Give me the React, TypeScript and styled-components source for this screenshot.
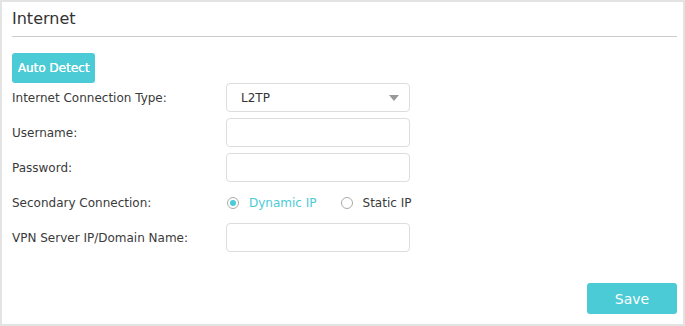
import styled, { createGlobalStyle } from "styled-components"

const Global = createGlobalStyle`
  html, body {
    margin: 0;
    padding: 0;
    background: #ffffff;
  }
  body {
    font-family: "DejaVu Sans", Verdana, sans-serif;
    color: #333333;
  }
`

const teal = "#4acbd6"

const fields = [
  { label: "Internet Connection Type:", kind: "select", value: "L2TP" },
  { label: "Username:", kind: "input" },
  { label: "Password:", kind: "input" },
  { label: "Secondary Connection:", kind: "radio" },
  { label: "VPN Server IP/Domain Name:", kind: "input" },
]

export default function App() {
  return (
    <>
      <Global />
      <Panel>
        <Title>Internet</Title>
        <Content>
          <Button>Auto Detect</Button>
          <Form>
            {fields.map((f) => (
              <Row key={f.label}>
                <Label>{f.label}</Label>
                {f.kind === "select" && (
                  <Field>
                    <span>{f.value}</span>
                    <Caret />
                  </Field>
                )}
                {f.kind === "input" && <Field />}
                {f.kind === "radio" && (
                  <Radios>
                    <RadioItem $active>
                      <RadioDot $active />
                      Dynamic IP
                    </RadioItem>
                    <RadioItem>
                      <RadioDot />
                      Static IP
                    </RadioItem>
                  </Radios>
                )}
              </Row>
            ))}
          </Form>
        </Content>
        <Footer>
          <SaveButton>Save</SaveButton>
        </Footer>
      </Panel>
    </>
  )
}

const Panel = styled.div`
  box-sizing: border-box;
  width: 685px;
  height: 326px;
  border: 2px solid #e3e3e3;
  padding: 0 6px 0 10px;
  display: flex;
  flex-direction: column;
`

const Title = styled.div`
  font-size: 16px;
  line-height: 20px;
  padding: 7px 0 7px;
  border-bottom: 1px solid #cccccc;
  color: #333333;
`

const Content = styled.div`
  padding-top: 16px;
  flex-grow: 1;
`

const Button = styled.button`
  font-family: inherit;
  background: ${teal};
  color: #ffffff;
  border: none;
  border-radius: 3px;
  height: 30px;
  width: 83px;
  padding: 0;
  font-size: 12px;
  font-weight: normal;
  text-shadow: 0.3px 0 0 #ffffff;
`

const Form = styled.div`
  display: flex;
  flex-direction: column;
  gap: 6px;
`

const Row = styled.div`
  display: grid;
  grid-template-columns: 214px 184px;
  align-items: center;
  height: 29px;
`

const Label = styled.div`
  font-size: 12px;
  color: #3a3a3a;
`

const Field = styled.div`
  box-sizing: border-box;
  height: 29px;
  border: 1px solid #dddddd;
  border-radius: 4px;
  display: flex;
  align-items: center;
  justify-content: space-between;
  padding: 0 10px 0 14px;
  font-size: 12px;
  color: #333333;
`

const Caret = styled.div`
  width: 0;
  height: 0;
  border-left: 5px solid transparent;
  border-right: 5px solid transparent;
  border-top: 6px solid #999999;
`

const Radios = styled.div`
  display: flex;
  gap: 24px;
  align-items: center;
  padding-left: 1px;
  white-space: nowrap;
`

const RadioItem = styled.div<{ $active?: boolean }>`
  display: flex;
  flex-shrink: 0;
  align-items: center;
  gap: 10px;
  font-size: 12px;
  color: ${(p) => (p.$active ? teal : "#3a3a3a")};
`

const RadioDot = styled.span<{ $active?: boolean }>`
  box-sizing: border-box;
  width: 12px;
  height: 12px;
  border-radius: 50%;
  border: 1px solid #aaaaaa;
  display: flex;
  align-items: center;
  justify-content: center;
  &::after {
    content: "";
    width: 6px;
    height: 6px;
    border-radius: 50%;
    background: ${(p) => (p.$active ? teal : "transparent")};
  }
`

const Footer = styled.div`
  display: flex;
  justify-content: flex-end;
  padding-bottom: 10px;
`

const SaveButton = styled.button`
  font-family: inherit;
  width: 90px;
  height: 31px;
  background: ${teal};
  color: #ffffff;
  border: none;
  border-radius: 3px;
  font-size: 14px;
`
